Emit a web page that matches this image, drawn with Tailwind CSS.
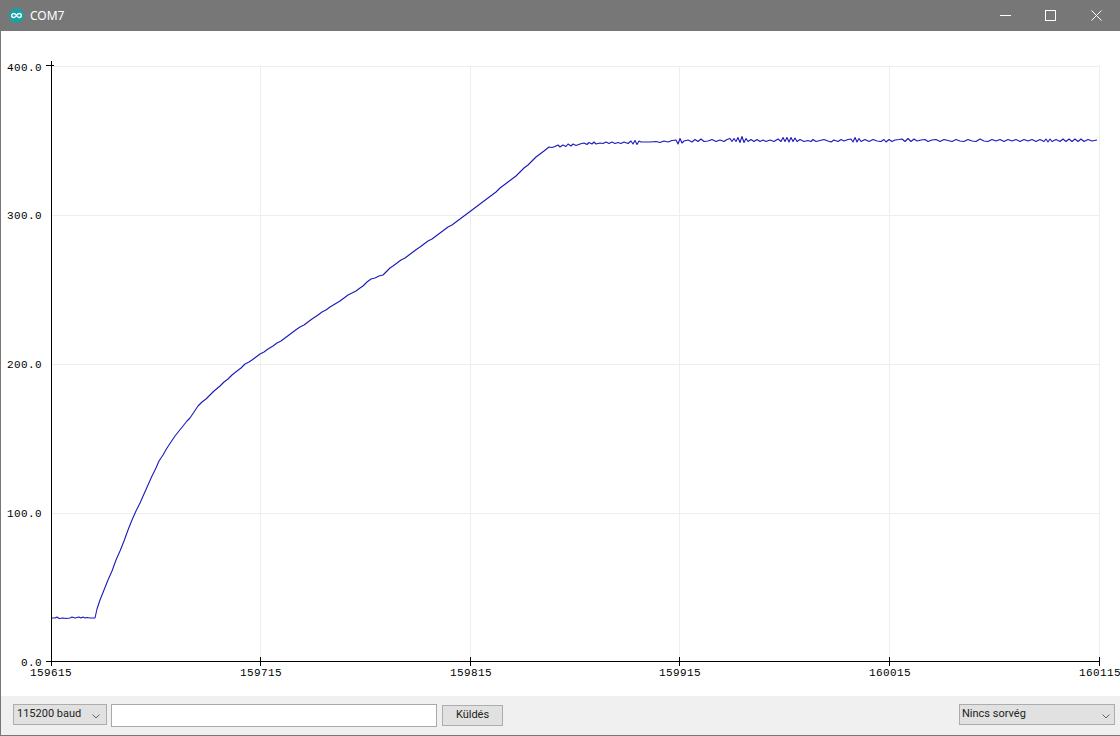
<!DOCTYPE html>
<html lang="en">
    <head>
        <meta charset="UTF-8" />
        <meta name="viewport" content="width=device-width, initial-scale=1.0" />
        <title>COM7</title>
        <script src="https://cdn.jsdelivr.net/npm/@tailwindcss/browser@4"></script>
    </head>
    <body class="bg-[#f0f0f0] overflow-hidden font-['Roboto',sans-serif]">
        <div class="flex flex-col h-[736px] w-[1120px] border-l border-b border-[#777777]">
            <!-- Title bar -->
            <div class="flex items-center h-[31px] shrink-0 bg-[#777777] -ml-px text-white">
                <svg class="ml-[9px] w-[15px] h-[15px]" viewBox="0 0 15 15">
                    <circle cx="7.5" cy="7.5" r="7.5" fill="#17a2a5" />
                    <path d="M7.5 7.5C6.5 5.9 5.5 5.5 4.7 5.5a2 2 0 0 0 0 4C5.5 9.5 6.5 9.1 7.5 7.5c1-1.6 2-2 2.8-2a2 2 0 0 1 0 4C9.5 9.5 8.5 9.1 7.5 7.5Z" fill="none" stroke="#fff" stroke-width="1.3" />
                </svg>
                <span class="ml-[6px] text-[12px] leading-none font-['Noto_Sans',sans-serif]">COM7</span>
                <svg class="ml-auto mr-[34px] w-[11px] h-[11px]" viewBox="0 0 11 11"><path d="M0 5.5H11" stroke="#fff" /></svg>
                <svg class="mr-[35px] w-[11px] h-[11px]" viewBox="0 0 11 11"><rect x="0.5" y="0.5" width="10" height="10" fill="none" stroke="#fff" /></svg>
                <svg class="mr-[18px] w-[11px] h-[11px]" viewBox="0 0 11 11"><path d="M0.5 0.5L10.5 10.5M10.5 0.5L0.5 10.5" stroke="#fff" /></svg>
            </div>

            <!-- Plot -->
            <svg class="block shrink-0 bg-white w-[1119px] h-[665px] font-['Liberation_Mono',monospace] text-[11px] tracking-[0.4px]" viewBox="1 31 1119 665">
                <!-- Grid -->
                <g stroke="#eeeeee" fill="none" shape-rendering="crispEdges">
                    <path d="M51 66.5H1099M51 215.5H1099M51 364.5H1099M51 513.5H1099" />
                    <path d="M260.5 66V661M470.5 66V661M679.5 66V661M889.5 66V661M1099.5 66V661" />
                </g>

                <!-- Trace -->
                <polyline fill="none" stroke="#1a1ab8" stroke-width="1.1" stroke-linejoin="round" points="51,618 55,618 57,617 59,618.5 63,618 66,618.5 70,618 72,617 75,618 79,617 81,618 83,617 85,618 87,617.5 90,618 95,618 97,609 100,600 104,590 108,580 112,571 116,560 120,551 124,541 128,530 132,520 136,511 140,503 144,494 148,485 152,476 156,468 159,461 163,455 167,448 171,442 175,436 179,431 183,426 187,421 190,418 194,412 198,406 202,402 206,399 210,395 214,391 220,386 224,382 228,379 232,375 237,371 241,368 245,364 249,362 252,360 256,357 260,354 264,352 268,349 273,346 277,343 281,341 285,338 289,335 293,332 297,329 300,327 304,325 308,322 312,319 318,315 322,312 326,310 330,307 335,304 340,301 344,298 348,295 352,293 356,291 360,288 363,286 367,282 371,279 375,278 379,276 383,275 387,271 390,268 393,266 397,263 401,260 405,258 409,255 413,252 417,249 420,247 424,244 428,241 432,239 436,236 440,233 444,230 448,227 452,225 456,222 460,219 464,216 468,213 472,210 476,207 480,204 484,201 488,198 492,195 496,192 500,188 504,185 508,182 512,179 516,176 520,172 524,168 528,165 532,161 536,157 540,154 544,151 549,147 552,147.5 555,146.5 558,145 560,147 563,145 566,146.5 568,144 571,146 573,144 576,145.5 580,144 584,143 587,144.5 589,142.5 592,144 594,142 596,144 600,143 603,143.5 606,142 609,143.5 612,142 615,143.5 618,142.5 621,143.5 624,142 628,143.5 631,141 633,144 635,140.5 637,144.5 639,141 641,142 650,142 656,141.5 660,142.5 664,141 668,142 672,140.5 676,140 678,144 680,138.5 682,143 684,141 688,140 692,142 695,139.5 698,141.5 701,139 704,141.5 708,141 712,139.5 716,141.5 720,140 724,141.5 727,139.5 730,138.5 732,141.5 734,138.5 736,141.5 738,137.5 740,142.5 742,136.5 744,142.5 746,138.5 748,141.5 751,139.5 754,141.5 757,139.5 760,141.5 763,140 766,141.5 770,140 774,141.5 778,139 781,141.5 783,137.5 785,141.5 787,137.5 789,142 791,137.5 793,141.5 795,138 797,141.5 800,139.5 804,141.5 808,140.5 811,141.5 813,139.5 816,141.5 820,140.5 824,139.5 828,141 831,142 834,140 838,141.5 841,139.5 844,141 848,139.5 851,139 853,142 855,137.5 857,142 859,138.5 861,141.5 865,139.5 869,141.5 873,139.5 877,141 881,141.5 884,139.5 886,142 889,139.5 892,141.5 895,140 899,139.5 902,139 905,141.5 908,138.5 911,141.5 914,139 917,141 921,140 925,139.5 928,141.5 932,140 936,139.5 940,141.5 944,139.5 948,140.5 952,141.5 956,139.5 960,141 964,141.5 968,139.5 972,141 976,141.5 980,139 984,141 988,141.5 992,139.5 996,141 1000,139.5 1004,141.5 1008,139.5 1012,141 1016,139.5 1020,141.5 1024,139.5 1028,141 1032,139.5 1036,141.5 1040,139.5 1044,141.5 1046,139 1048,142 1050,139 1052,141.5 1056,139.5 1060,141.5 1063,139 1066,141.5 1069,139 1072,141.5 1075,139 1078,141.5 1081,139 1084,141.5 1088,139.5 1092,141 1097,140" />

                <!-- Axes and ticks -->
                <g stroke="#000000" fill="none" shape-rendering="crispEdges">
                    <path d="M51.5 61V666M46 661.5H1100" />
                    <path d="M46 65.5H54" />
                    <path d="M260.5 657V666M470.5 657V666M679.5 657V666M889.5 657V666M1099.5 657V666" />
                </g>

                <!-- Labels -->
                <g fill="#000000">
                    <text x="7" y="71">400.0</text>
                    <text x="7" y="219">300.0</text>
                    <text x="7" y="368">200.0</text>
                    <text x="7" y="517">100.0</text>
                    <text x="21" y="666">0.0</text>
                    <text x="30" y="676">159615</text>
                    <text x="240" y="676">159715</text>
                    <text x="450" y="676">159815</text>
                    <text x="659" y="676">159915</text>
                    <text x="869" y="676">160015</text>
                    <text x="1079" y="676">160115</text>
                </g>
            </svg>

            <!-- Bottom controls -->
            <div class="flex items-start flex-1 pt-[8px] text-[11px] text-[#222222]">
                <div class="relative ml-[12px] w-[94px] h-[21px]">
                    <select class="appearance-none w-full h-full pl-[3px] bg-[#e1e1e1] border border-[#adadad] outline-none">
                        <option>115200 baud</option>
                    </select>
                    <svg class="absolute right-[7px] top-[10px] w-[8px] h-[5px]" viewBox="0 0 8 5"><path d="M0.5 0.5L4 4L7.5 0.5" fill="none" stroke="#666666" /></svg>
                </div>
                <input class="ml-[4px] w-[326px] h-[23px] bg-white border border-[#a9a9a9] outline-none" type="text" />
                <button class="ml-[5px] mt-px w-[61px] h-[21px] bg-[#e1e1e1] border border-[#adadad]">Küldés</button>
                <div class="relative ml-auto mr-[5px] w-[156px] h-[21px]">
                    <select class="appearance-none w-full h-full pl-[2px] bg-[#e1e1e1] border border-[#adadad] outline-none">
                        <option>Nincs sorvég</option>
                    </select>
                    <svg class="absolute right-[5px] top-[10px] w-[8px] h-[5px]" viewBox="0 0 8 5"><path d="M0.5 0.5L4 4L7.5 0.5" fill="none" stroke="#666666" /></svg>
                </div>
            </div>
        </div>
    </body>
</html>
